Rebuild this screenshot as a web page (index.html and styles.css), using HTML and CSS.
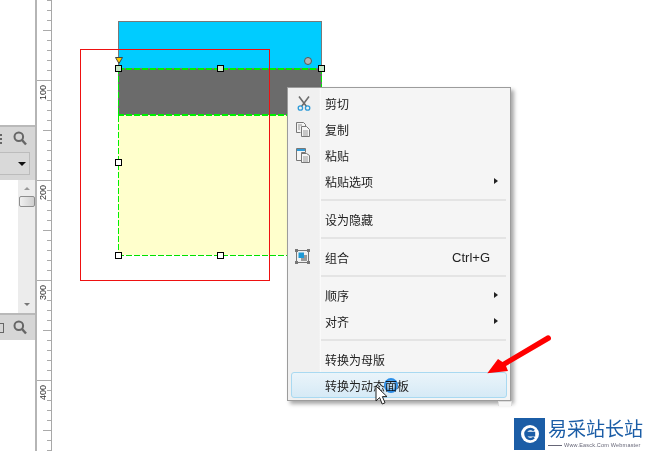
FILE: index.html
```html
<!DOCTYPE html>
<html lang="zh-CN">
<head>
    <meta charset="UTF-8">
    <title>转换为动态面板</title>
    <link rel="stylesheet" href="styles.css">
</head>
<body>
    <div class="sidebar">
        <div class="side-blank"></div>
        <div class="side-bar">
            <span class="dots"></span>
            <svg class="search" width="14" height="15" viewBox="0 0 14 15"><circle cx="5.8" cy="5.8" r="4.3" fill="none" stroke="#666" stroke-width="2"/><path d="M9 9l4 4.5" stroke="#666" stroke-width="2.4"/></svg>
        </div>
        <div class="side-select"><div class="select-box"><span class="select-arrow"></span></div></div>
        <div class="side-list">
            <div class="scrollbar">
                <span class="scroll-up"></span>
                <span class="scroll-thumb"></span>
                <span class="scroll-down"></span>
            </div>
        </div>
        <div class="side-bar side-bar-low">
            <span class="box-icon"></span>
            <svg class="search" width="14" height="15" viewBox="0 0 14 15"><circle cx="5.8" cy="5.8" r="4.3" fill="none" stroke="#666" stroke-width="2"/><path d="M9 9l4 4.5" stroke="#666" stroke-width="2.4"/></svg>
        </div>
    </div>
    <div class="ruler">
        <span class="ruler-num n100">100</span>
        <span class="ruler-num n200">200</span>
        <span class="ruler-num n300">300</span>
        <span class="ruler-num n400">400</span>
    </div>
    <div class="canvas">
        <div class="shape shape-blue"></div>
        <div class="shape shape-gray"></div>
        <div class="shape shape-yellow"></div>
        <div class="select-line"></div>
        <div class="select-mid"></div>
        <div class="red-box"></div>
        <span class="handle h1 tint"></span>
        <span class="handle h2 tint"></span>
        <span class="handle h3 tint"></span>
        <span class="handle h4"></span>
        <span class="handle h5"></span>
        <span class="handle h6"></span>
        <svg class="marker" width="8" height="7" viewBox="0 0 8 7"><path d="M.5.5h7L4 6.5z" fill="#ffcc00" stroke="#444"/></svg>
        <span class="circle"></span>
    </div>

    <div class="menu">
        <div class="menu-row">
            <svg class="menu-icon icon-cut" width="14" height="15" viewBox="0 0 14 15"><path d="M2 .5l7.5 10M12 .5l-7.5 10" stroke="#6d6d6d" stroke-width="1.6" fill="none"/><circle cx="3.4" cy="12" r="2.2" fill="none" stroke="#2f9bd8" stroke-width="1.3"/><circle cx="10.6" cy="12" r="2.2" fill="none" stroke="#2f9bd8" stroke-width="1.3"/></svg>
            <span class="menu-label">剪切</span>
        </div>
        <div class="menu-row">
            <svg class="menu-icon" width="14" height="15" viewBox="0 0 14 15"><path d="M.5.5h7l2 2v3M.5.5v10h4" fill="#f5f5f5" stroke="#777"/><path d="M5.5 4.5h5l3 3v7h-8z" fill="#f5f5f5" stroke="#777"/><path d="M2 3h4M2 5h2M2 7h2M7 9h5M7 11h5M7 13h5" stroke="#999"/></svg>
            <span class="menu-label">复制</span>
        </div>
        <div class="menu-row">
            <svg class="menu-icon" width="14" height="15" viewBox="0 0 14 15"><path d="M.5.5h9v4h-4v8h-5z" fill="#f5f5f5" stroke="#777"/><path d="M1 1h8v2H1z" fill="#2f9bd8"/><path d="M5.5 5.5h5l3 2v7h-8z" fill="#f5f5f5" stroke="#777"/><path d="M7 9h5M7 11h5M7 13h5" stroke="#999"/></svg>
            <span class="menu-label">粘贴</span>
        </div>
        <div class="menu-row has-sub"><span class="menu-label">粘贴选项</span></div>
        <div class="menu-sep"></div>
        <div class="menu-row"><span class="menu-label">设为隐藏</span></div>
        <div class="menu-sep"></div>
        <div class="menu-row">
            <svg class="menu-icon icon-group" width="15" height="15" viewBox="0 0 15 15"><path d="M1.5 1.5h12v12h-12z" fill="none" stroke="#777"/><path d="M0 0h3v3H0zM12 0h3v3h-3zM0 12h3v3H0zM12 12h3v3h-3z" fill="#777"/><path d="M6 6h6v6H6z" fill="#9a9a9a"/><path d="M3.5 3.5h5.5v5.5H3.5z" fill="#1e9ad6"/></svg>
            <span class="menu-label">组合</span>
            <span class="menu-key">Ctrl+G</span>
        </div>
        <div class="menu-sep"></div>
        <div class="menu-row has-sub"><span class="menu-label">顺序</span></div>
        <div class="menu-row has-sub"><span class="menu-label">对齐</span></div>
        <div class="menu-sep"></div>
        <div class="menu-row"><span class="menu-label">转换为母版</span></div>
        <div class="menu-row menu-row-active"><span class="menu-label">转换为动态面板</span></div>
    </div>
    <span class="menu-scrap"></span>

    <span class="click-dot"></span>
    <svg class="cursor" width="14" height="21" viewBox="0 0 14 21"><path d="M1 1v15l3.6-3.4 2.6 6.4 2.8-1.2-2.6-6.2H12z" fill="#fff" stroke="#222" stroke-width="1"/></svg>
    <svg class="arrow" width="70" height="46" viewBox="0 0 70 46"><path d="M2.3 40.3L13 26l4.5 3L62 2.500a3 3 0 0 1 3.500 4.500L21 33l2 5z" fill="#f00"/></svg>

    <div class="logo">
        <div class="logo-mark">
            <svg width="20" height="20" viewBox="0 0 20 20"><circle cx="10" cy="10" r="9" fill="#fff"/><path d="M14 6.500a5 5 0 1 0 0 7M6 9h8v2.400H6" fill="none" stroke="#1b5da6" stroke-width="2.400"/></svg>
        </div>
        <div class="logo-text">
            <div class="logo-name">易采站长站</div>
            <div class="logo-sub"><span class="logo-dash"></span>Www.Easck.Com Webmaster</div>
        </div>
    </div>
</body>
</html>
```

FILE: styles.css
```css
html, body {
    margin: 0;
    padding: 0;
    height: 451px;
    overflow: hidden;
    background: white;
}
body {
    display: flex;
    font-family: "Noto Sans CJK SC", "Liberation Sans", sans-serif;
    color: #222;
}

/* left panel, cut off by the window */
.sidebar {
    width: 35px;
    height: 451px;
    display: flex;
    flex-direction: column;
    flex-shrink: 0;
}
.side-blank {
    height: 125px;
}
.side-bar {
    height: 23px;
    background: #d6d6d6;
    border-top: 2px solid #b9b9b9;
    display: flex;
    align-items: center;
    justify-content: space-between;
    padding-right: 8px;
}
.side-bar-low {
    height: 25px;
}
.dots {
    width: 2px;
    height: 10px;
    background: repeating-linear-gradient(#666 0 2px, transparent 2px 4px);
}
.box-icon {
    width: 3px;
    height: 8px;
    border: 1px solid #666;
    border-left: none;
}
.side-select {
    height: 30px;
    background: #d6d6d6;
    padding-top: 2px;
    box-sizing: border-box;
}
.select-box {
    width: 29px;
    height: 21px;
    background: #d9d9d9;
    border: 1px solid #bcbcbc;
    border-left: none;
    position: relative;
}
.select-arrow {
    position: absolute;
    left: 18px;
    top: 9px;
    border-left: 4px solid transparent;
    border-right: 4px solid transparent;
    border-top: 4px solid #111;
}
.side-list {
    height: 133px;
    display: flex;
    justify-content: flex-end;
}
.scrollbar {
    width: 17px;
    background: #ececec;
    display: flex;
    flex-direction: column;
    align-items: center;
    position: relative;
}
.scroll-up {
    margin-top: 7px;
    border-left: 3px solid transparent;
    border-right: 3px solid transparent;
    border-bottom: 3px solid #999;
}
.scroll-thumb {
    width: 14px;
    height: 9px;
    margin-top: 6px;
    border: 1px solid #8e8e8e;
    border-radius: 2px;
    background: linear-gradient(to right, #f0f0f0, #cfcfcf);
}
.scroll-down {
    margin-top: auto;
    margin-bottom: 7px;
    border-left: 3px solid transparent;
    border-right: 3px solid transparent;
    border-top: 3px solid #777;
}

/* vertical ruler */
.ruler {
    width: 14px;
    height: 451px;
    flex-shrink: 0;
    position: relative;
    border-left: 2px solid #b5b5b5;
    border-right: 1px solid #a8a8a8;
    background:
        repeating-linear-gradient(to bottom, #aaa 0 1px, transparent 1px 100px) 0 80px / 100% 100% no-repeat,
        repeating-linear-gradient(to bottom, #aaa 0 1px, transparent 1px 50px) 6px 30px / 8px 100% no-repeat,
        repeating-linear-gradient(to bottom, #aaa 0 1px, transparent 1px 10px) 10px 0 / 4px 100% no-repeat;
}
.ruler-num {
    position: absolute;
    left: 2px;
    font: 9px/9px "Liberation Sans", sans-serif;
    color: #333;
    writing-mode: vertical-rl;
    transform: rotate(180deg);
}
.n100 { top: 85px; }
.n200 { top: 185px; }
.n300 { top: 285px; }
.n400 { top: 385px; }

/* drawing area */
.canvas {
    flex: 1;
    position: relative;
}
.shape {
    position: absolute;
    left: 66px;
    width: 204px;
    box-sizing: border-box;
}
.shape-blue {
    top: 21px;
    height: 48px;
    background: #00ccff;
    border: 1px solid #797979;
}
.shape-gray {
    top: 69px;
    height: 46px;
    background: #6b6b6b;
}
.shape-yellow {
    top: 115px;
    height: 140px;
    background: #ffffcc;
}
.select-line {
    position: absolute;
    left: 66px;
    top: 68px;
    width: 204px;
    height: 188px;
    background:
        repeating-linear-gradient(to right, #00f000 0 6px, transparent 6px 8px) 0 0 / 100% 2px no-repeat,
        repeating-linear-gradient(to right, #00e000 0 6px, transparent 6px 8px) 0 100% / 100% 1px no-repeat,
        repeating-linear-gradient(to bottom, #00f000 0 6px, transparent 6px 8px) 0 0 / 1px 100% no-repeat,
        repeating-linear-gradient(to bottom, #00f000 0 6px, transparent 6px 8px) 100% 0 / 1px 100% no-repeat;
}
.select-mid {
    position: absolute;
    left: 66px;
    top: 114px;
    width: 204px;
    height: 2px;
    background: repeating-linear-gradient(to right, #00f000 0 6px, transparent 6px 8px);
}
.red-box {
    position: absolute;
    left: 28px;
    top: 49px;
    width: 190px;
    height: 232px;
    box-sizing: border-box;
    border: 1px solid #ee1111;
}
.handle {
    position: absolute;
    width: 7px;
    height: 7px;
    box-sizing: border-box;
    border: 1px solid #000;
    background: white;
}
.tint { background: #c4e6c4; }
.h1 { left: 63px; top: 65px; }
.h2 { left: 165px; top: 65px; }
.h3 { left: 266px; top: 65px; }
.h4 { left: 63px; top: 159px; }
.h5 { left: 63px; top: 252px; }
.h6 { left: 165px; top: 252px; }
.marker {
    position: absolute;
    left: 63px;
    top: 57px;
}
.circle {
    position: absolute;
    left: 252px;
    top: 57px;
    width: 8px;
    height: 8px;
    box-sizing: border-box;
    border-radius: 50%;
    background: #b4b4b4;
    border: 1px solid #555;
}

/* context menu */
.menu {
    position: absolute;
    left: 287px;
    top: 87px;
    width: 224px;
    height: 314px;
    box-sizing: border-box;
    padding-top: 2px;
    border: 1px solid #9c9c9c;
    background: linear-gradient(to right, #f0f0f0 31px, #e6e6e6 31px, #fff 32px, #f5f5f5 33px);
    box-shadow: 3px 3px 4px rgba(0, 0, 0, 0.35);
}
.menu-row {
    height: 26px;
    display: flex;
    align-items: center;
    padding-left: 37px;
    padding-right: 20px;
    font-size: 12px;
    position: relative;
}
.menu-icon {
    position: absolute;
    left: 8px;
    top: 6px;
}
.icon-cut { left: 9px; }
.icon-group {
    left: 7px;
    top: 5px;
}
.menu-key {
    margin-left: auto;
    font: 13px "Liberation Sans", sans-serif;
}
.has-sub::after {
    content: "";
    position: absolute;
    left: 206px;
    top: 10px;
    border-top: 3px solid transparent;
    border-bottom: 3px solid transparent;
    border-left: 4px solid #222;
}
.menu-sep {
    height: 2px;
    margin: 5px 4px 5px 33px;
    background: #e4e4e4;
}
.menu-row-active::before {
    content: "";
    position: absolute;
    left: 3px;
    top: 0;
    width: 216px;
    height: 26px;
    box-sizing: border-box;
    border: 1px solid #a9d9f1;
    border-radius: 3px;
    background: linear-gradient(to bottom, #eaf4fa, #d6eaf6);
}
.menu-label {
    position: relative;
}
.menu-scrap {
    position: absolute;
    left: 498px;
    top: 401px;
    width: 12px;
    height: 4px;
    border: 1px solid #dcdcdc;
    border-bottom: none;
    background: #f6f6f6;
}

/* overlays from the tutorial */
.click-dot {
    position: absolute;
    left: 384px;
    top: 378px;
    width: 14px;
    height: 15px;
    border-radius: 50%;
    background: radial-gradient(circle, #d8ecfb 0 3px, #2f96ee 6px);
    mix-blend-mode: multiply;
}
.cursor {
    position: absolute;
    left: 375px;
    top: 385px;
}
.arrow {
    position: absolute;
    left: 485px;
    top: 333px;
}

/* site logo */
.logo {
    position: absolute;
    left: 514px;
    top: 418px;
    display: flex;
    gap: 3px;
    background: white;
}
.logo-mark {
    width: 31px;
    height: 32px;
    background: #1b5da6;
    display: flex;
    align-items: center;
    justify-content: center;
}
.logo-name {
    font-size: 19px;
    line-height: 20px;
    color: #1b5da6;
    white-space: nowrap;
}
.logo-sub {
    font: 5.5px/8px "Liberation Sans", sans-serif;
    letter-spacing: 0.2px;
    margin-top: 3px;
    color: #667;
    white-space: nowrap;
    display: flex;
    align-items: center;
    gap: 2px;
}
.logo-dash {
    width: 14px;
    height: 1px;
    background: #667;
}
```
